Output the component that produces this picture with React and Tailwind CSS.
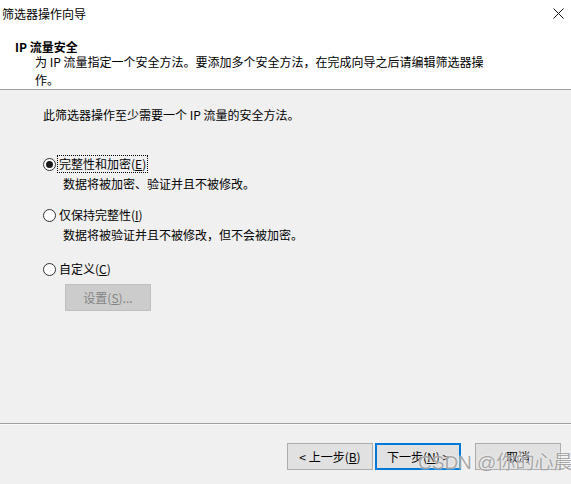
import React from "react";

const font = "font-['Segoe_UI','Noto_Sans_CJK_SC',sans-serif]";

function Radio({ checked, label, accel, rest, focused }) {
  return (
    <div className="flex items-center h-[18px]">
      {/* radio circle */}
      <span className="w-[13px] h-[13px] rounded-full border border-[#333333] bg-white flex items-center justify-center shrink-0">
        {checked && <span className="w-[7px] h-[7px] rounded-full bg-[#1a1a1a]" />}
      </span>
      <span
        className={`ml-[2px] px-[1px] leading-[16px] ${
          focused ? "outline outline-1 outline-dotted outline-black" : ""
        }`}
      >
        {label}(<span className="underline">{accel}</span>){rest}
      </span>
    </div>
  );
}

export default function App() {
  return (
    <div className={`w-[571px] h-[484px] bg-[#f0f0f0] flex flex-col relative overflow-hidden text-[12px] text-black ${font}`}>
      {/* Header */}
      <div className="bg-white h-[90px] border-b border-[#a0a0a0] shrink-0">
        <div className="h-[27px] flex items-center justify-between pl-[2px] pr-[7px]">
          <span className="leading-[16px]">筛选器操作向导</span>
          <svg width="11" height="11" viewBox="0 0 11 11" className="mt-[-1px]">
            <path d="M0.5 0.5 L10.5 10.5 M10.5 0.5 L0.5 10.5" stroke="#111" strokeWidth="1" fill="none" />
          </svg>
        </div>
        <div className="pl-[15px] mt-[12px] leading-[16px] font-bold">IP 流量安全</div>
        <div className="pl-[35px] -mt-[2px] leading-[18px]">
          为 IP 流量指定一个安全方法。要添加多个安全方法，在完成向导之后请编辑筛选器操
          <br />
          作。
        </div>
      </div>

      {/* Body */}
      <div className="flex-1 pl-[43px] pt-[16px]">
        <div className="leading-[18px]">此筛选器操作至少需要一个 IP 流量的安全方法。</div>

        <div className="mt-[31px]">
          <Radio checked focused label="完整性和加密" accel="E" />
        </div>
        <div className="ml-[20px] mt-[2px] leading-[18px]">数据将被加密、验证并且不被修改。</div>

        <div className="mt-[13px]">
          <Radio label="仅保持完整性" accel="I" />
        </div>
        <div className="ml-[20px] mt-[2px] leading-[18px]">数据将被验证并且不被修改，但不会被加密。</div>

        <div className="mt-[16px]">
          <Radio label="自定义" accel="C" />
        </div>
        <button
          disabled
          className="ml-[22px] mt-[6px] w-[86px] h-[27px] bg-[#cccccc] border border-[#bfbfbf] text-[#838383] leading-[16px]"
        >
          设置(<span className="underline">S</span>)...
        </button>
      </div>

      {/* Separator */}
      <div className="h-[2px] border-t border-[#a0a0a0] bg-white/60 shrink-0" />

      {/* Footer */}
      <div className="flex justify-end pt-[18px] pb-[14px] pr-[10px] shrink-0">
        <button className="w-[86px] h-[27px] bg-[#e1e1e1] border border-[#adadad] leading-[16px]">
          &lt; 上一步(<span className="underline">B</span>)
        </button>
        <button className="ml-[2px] w-[86px] h-[27px] bg-[#e1e1e1] border-2 border-[#0078d7] leading-[16px]">
          下一步(<span className="underline">N</span>) &gt;
        </button>
        <button className="ml-[14px] w-[86px] h-[27px] bg-[#e1e1e1] border border-[#adadad] leading-[16px]">
          取消
        </button>
      </div>

      {/* Watermark */}
      <div className="absolute left-[418px] top-[452px] text-[19px] leading-[22px] text-[#9c9c9c]/90 [text-shadow:0_0_2px_#ffffff] pointer-events-none font-['Liberation_Sans','Noto_Sans_CJK_SC',sans-serif] whitespace-nowrap">
        CSDN @你的心晨
      </div>
    </div>
  );
}
